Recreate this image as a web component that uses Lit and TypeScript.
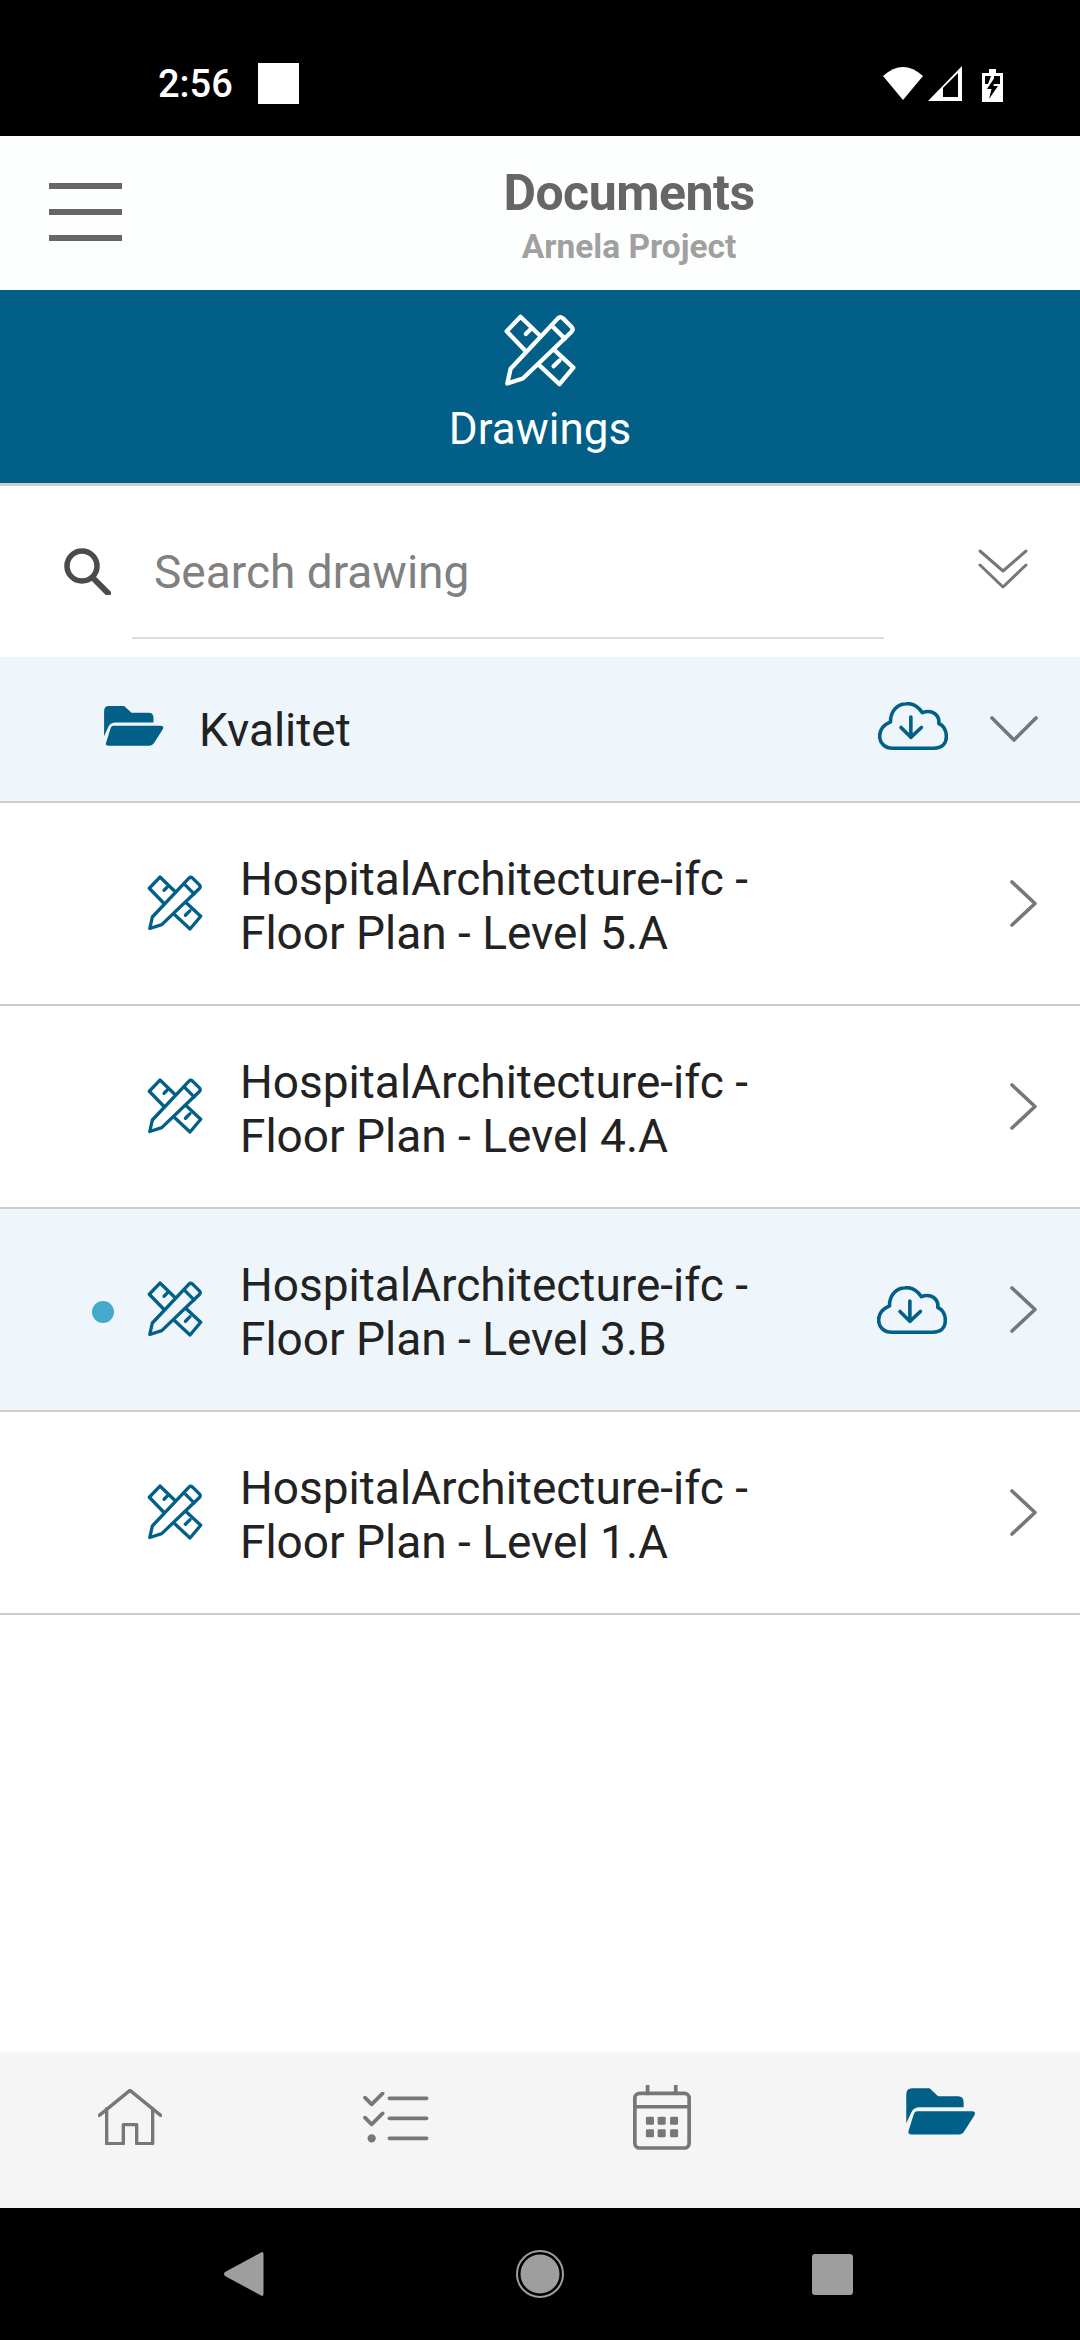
import { LitElement, html, css, svg } from "lit";
import { customElement } from "lit/decorators.js";

const drawingIcon = (cls: string) => html`<svg class=${cls} viewBox="68 40 218 220" fill="none" stroke="currentColor" stroke-width="13" stroke-linejoin="round" stroke-linecap="round">
  <path d="M118 48 L178 106 M134 152 L76 92 L118 48"/>
  <path d="M134 100 L152 82"/>
  <path d="M176 196 L236 252 L278 202 L220 148"/>
  <path d="M218 198 L236 180"/>
  <path d="M78 250 L88 205 L232 52 Q238 46 246 52 L272 78 Q280 86 272 94 L125 235 Z"/>
  <path d="M212 74 L252 114"/>
</svg>`;

const cloudIcon = html`<svg class="cloud" viewBox="50 65 213 145" fill="none" stroke="currentColor" stroke-width="11" stroke-linejoin="round" stroke-linecap="round">
  <path d="M95 205 H220 C245 205 258 190 258 170 C258 150 248 135 235 130 C238 105 215 85 185 97 C170 75 150 68 135 70 C105 72 88 95 88 125 C65 135 55 150 55 168 C55 190 72 205 95 205 Z"/>
  <path d="M150 110 V172 M120 142 L150 172 L182 142"/>
</svg>`;

const folderPaths = svg`
  <path d="M912 100 Q912 80 930 80 H985 L1012 105 H1075 Q1092 105 1092 125 V140 H955 Q935 140 928 155 L912 190 Z"/>
  <path d="M945 152 H1118 Q1132 152 1126 165 L1094 215 Q1088 225 1076 225 H930 Q914 225 920 211 L936 160 Q939 152 945 152 Z"/>`;

const chevronRight = html`<svg class="chev-r" viewBox="0 0 27 47" fill="none" stroke="currentColor" stroke-width="3.6" stroke-linecap="round" stroke-linejoin="round"><path d="M2 2 L25 23.5 L2 45"/></svg>`;

const rows = [
  { level: "5.A" },
  { level: "4.A" },
  { level: "3.B", active: true },
  { level: "1.A" },
];

@customElement("app-root")
export class AppRoot extends LitElement {
  static styles = css`
    :host { display: flex; flex-direction: column; width: 1080px; height: 2340px; background: #fff; font-family: Roboto, "Liberation Sans", sans-serif; color: #222; overflow: hidden; }
    svg { display: block; flex: none; }
    .status { flex: none; height: 136px; box-sizing: border-box; padding: 31px 77px 0 158px; background: #000; color: #fff; display: flex; align-items: center; }
    .time { font-size: 38px; font-weight: 500; line-height: 44px; }
    .square { width: 41px; height: 41px; background: #fff; margin-left: 25px; }
    .spacer { flex: 1; }
    .status-icons { width: 120px; height: 36px; }
    .header { flex: none; height: 154px; display: flex; align-items: center; padding-left: 49px; background: #fdfffe; }
    .burger { width: 73px; display: flex; flex-direction: column; gap: 20px; margin-top: -2px; }
    .burger span { height: 6px; background: #666; }
    .titles { flex: 1; display: flex; flex-direction: column; align-items: center; padding: 8px 0 0 56px; }
    .title { font-size: 50px; font-weight: 700; color: #666; line-height: 56px; letter-spacing: -0.5px; }
    .subtitle { font-size: 33.5px; font-weight: 700; color: #a0a0a0; line-height: 44px; margin-top: 4px; }
    .tab { flex: none; background: #025f87; color: #fff; border-bottom: 3px solid #ccc; display: flex; flex-direction: column; align-items: center; padding-top: 24px; height: 169px; box-sizing: border-box; height: 196px; }
    .tab-icon { width: 72px; height: 73px; }
    .tab-label { font-size: 44px; line-height: 56px; margin-top: 14px; }
    .search { flex: none; height: 171px; display: flex; align-items: flex-start; padding: 61px 0 0 63px; box-sizing: border-box; }
    .mag { width: 48px; height: 48px; color: #4a4a4f; }
    .search-field { margin-left: 21px; width: 752px; height: 92px; border-bottom: 2px solid #ddd; padding-left: 22px; box-sizing: border-box; font-size: 46px; color: #808080; line-height: 50px; }
    .dbl { width: 50px; height: 41px; color: #777; margin-left: 94px; margin-top: 2px; }
    .row { display: flex; align-items: center; box-sizing: border-box; border-bottom: 2px solid #ccc; height: 203px; }
    .row.active { background: #eef6fc; }
    .folder-row { height: 146px; background: #eef6fc; padding-left: 103px; }
    .folder { width: 62px; height: 42px; color: #025f87; margin-top: -6px; }
    .folder-name { font-size: 46px; margin-left: 34px; line-height: 50px; flex: 1; padding-top: 2px; }
    .cloud { width: 70px; height: 48px; color: #025f87; }
    .folder-row .cloud { margin-top: -6px; }
    .chev-d { width: 48px; height: 26px; color: #777; margin-left: 42px; margin-right: 42px; }
    .row-main { position: relative; }
    .dot { position: absolute; left: 92px; top: 92px; width: 22px; height: 22px; border-radius: 50%; background: #45a9c9; }
    .row-pad { width: 147px; }
    .row-icon { width: 56px; height: 56px; color: #025f87; margin-top: -2px; }
    .row-text { font-size: 46px; line-height: 54px; margin-left: 37px; flex: 1; padding-top: 4px; }
    .row-text div { white-space: nowrap; }
    .row-main .cloud { margin-right: 63px; }
    .chev-r { width: 27px; height: 47px; color: #777; margin-right: 43px; }
    .grow { flex: 1; }
    .nav { flex: none; height: 155px; background: #f5f5f5; display: flex; align-items: flex-start; color: #777; box-shadow: 0 -3px 4px rgba(0,0,0,.02); }
    .house { width: 64px; height: 56px; margin: 36px 0 0 98px; }
    .check { width: 66px; height: 54px; margin: 39px 0 0 201px; }
    .cal { width: 58px; height: 65px; margin: 32px 0 0 204px; }
    .navfolder { width: 72px; height: 49px; margin: 34px 0 0 214px; color: #025f87; }
    .sys { flex: none; height: 132px; background: #000; display: flex; align-items: center; padding-left: 224px; color: #9e9e9e; }
    .back { width: 40px; height: 44px; }
    .home { width: 48px; height: 48px; margin-left: 252px; }
    .recent { width: 41px; height: 41px; background: #9e9e9e; border-radius: 3px; margin-left: 248px; }
  `;

  render() {
    return html`
      <div class="status">
        <div class="time">2:56</div>
        <div class="square"></div>
        <div class="spacer"></div>
        <svg class="status-icons" viewBox="0 0 120 36" fill="#fff">
          <path d="M0 10 Q20 -8 40 10 L20 34 Z"/>
          <path d="M45 35 L79 0 V35 Z"/>
          <path d="M60 31 V22 L75 7 V31 Z" fill="#000"/>
          <path d="M106 3 H113 V7 H120 V36 H99 V7 H106 Z"/>
          <path d="M102 10 H108 L105 18 H102 Z M111 10 H117 V18 H111 Z" fill="#000"/>
          <path d="M112 11 L104 23 H108.500 L106 33 L115 20 H110.500 Z" fill="#000"/>
        </svg>
      </div>
      <div class="header">
        <div class="burger"><span></span><span></span><span></span></div>
        <div class="titles">
          <div class="title">Documents</div>
          <div class="subtitle">Arnela Project</div>
        </div>
      </div>
      <div class="tab">
        ${drawingIcon("tab-icon")}
        <div class="tab-label">Drawings</div>
      </div>
      <div class="search">
        <svg class="mag" viewBox="0 0 48 48" fill="none" stroke="currentColor" stroke-linecap="round"><circle cx="19" cy="19" r="15" stroke-width="5.500"/><path d="M30 31 L45 46" stroke-width="6"/></svg>
        <div class="search-field">Search drawing</div>
        <svg class="dbl" viewBox="0 0 50 41" fill="none" stroke="currentColor" stroke-width="3" stroke-linecap="round" stroke-linejoin="round"><path d="M2 2 L25 22 L48 2"/><path d="M2 16 L25 38 L48 16"/></svg>
      </div>
      <div class="row folder-row">
        <svg class="folder" viewBox="908 78 226 150" fill="currentColor">${folderPaths}</svg>
        <div class="folder-name">Kvalitet</div>
        ${cloudIcon}
        <svg class="chev-d" viewBox="0 0 48 26" fill="none" stroke="currentColor" stroke-width="3.600" stroke-linecap="round" stroke-linejoin="round"><path d="M2 2 L24 24 L46 2"/></svg>
      </div>
      ${rows.map(
        (r) => html`<div class="row row-main ${r.active ? "active" : ""}">
          ${r.active ? html`<span class="dot"></span>` : ""}
          <div class="row-pad"></div>
          ${drawingIcon("row-icon")}
          <div class="row-text"><div>HospitalArchitecture-ifc -</div><div>Floor Plan - Level ${r.level}</div></div>
          ${r.active ? cloudIcon : ""}
          ${chevronRight}
        </div>`
      )}
      <div class="grow"></div>
      <div class="nav">
        <svg class="house" viewBox="54 86 192 168" fill="none" stroke="currentColor" stroke-width="10" stroke-linecap="round" stroke-linejoin="round"><path d="M58 165 L150 90 L242 165"/><path d="M80 145 V250 H130 V193 H170 V250 H218 V145"/></svg>
        <svg class="check" viewBox="850 98 196 162" fill="none" stroke="currentColor" stroke-width="11" stroke-linecap="round" stroke-linejoin="round"><path d="M855 115 L875 135 L908 102 M855 175 L875 195 L908 162 M928 117 H1040 M928 177 H1040 M928 237 H1040"/><circle cx="875" cy="237" r="7" fill="currentColor"/></svg>
        <svg class="cal" viewBox="100 75 172 194" fill="none" stroke="currentColor" stroke-width="11" stroke-linecap="round"><rect x="105" y="100" width="162" height="163" rx="14"/><path d="M105 140 H267 M143 78 V100 M227 78 V100"/><g fill="currentColor" stroke="none"><rect x="138" y="170" width="24" height="24" rx="4"/><rect x="173" y="170" width="24" height="24" rx="4"/><rect x="210" y="170" width="24" height="24" rx="4"/><rect x="138" y="207" width="24" height="24" rx="4"/><rect x="173" y="207" width="24" height="24" rx="4"/><rect x="210" y="207" width="24" height="24" rx="4"/></g></svg>
        <svg class="navfolder" viewBox="908 78 226 150" fill="currentColor">${folderPaths}</svg>
      </div>
      <div class="sys">
        <svg class="back" viewBox="0 0 40 44" fill="currentColor"><path d="M38 0 Q39.500 0 39.500 2 V42 Q39.500 44 38 44 L1 24 Q-1 22 1 20 Z"/></svg>
        <svg class="home" viewBox="0 0 48 48"><circle cx="24" cy="24" r="23" fill="none" stroke="currentColor" stroke-width="2"/><circle cx="24" cy="24" r="19.500" fill="currentColor"/></svg>
        <div class="recent"></div>
      </div>
    `;
  }
}
